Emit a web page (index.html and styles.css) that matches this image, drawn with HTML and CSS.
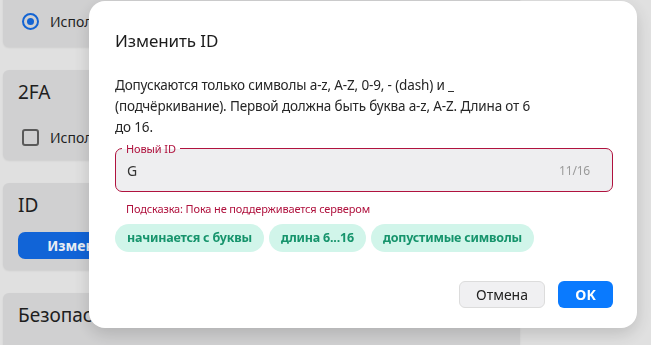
FILE: index.html
```html
<!DOCTYPE html>
<html lang="ru">
  <head>
    <meta charset="UTF-8" />
    <meta name="viewport" content="width=device-width, initial-scale=1.0" />
    <title>Изменить ID</title>
    <link rel="stylesheet" href="styles.css">
  </head>
  <body>
    <div class="page">
      <div class="card card-first">
        <div class="option">
          <span class="radio"></span>
          <span>Использовать пароль</span>
        </div>
      </div>

      <div class="card">
        <div class="card-title">2FA</div>
        <div class="option">
          <span class="checkbox"></span>
          <span>Использовать двухфакторную аутентификацию</span>
        </div>
      </div>

      <div class="card">
        <div class="card-title">ID</div>
        <button class="page-btn">Изменить ID</button>
      </div>

      <div class="card">
        <div class="card-title">Безопасность</div>
      </div>
    </div>

    <div class="overlay">
      <div class="dialog">
        <h2>Изменить ID</h2>
        <p>
          Допускаются только символы a-z, A-Z, 0-9, - (dash) и _
          (подчёркивание). Первой должна быть буква a-z, A-Z. Длина от 6
          до 16.
        </p>

        <div class="field">
          <span class="field-label">Новый ID</span>
          <span class="field-value">G</span>
          <span class="field-count">11/16</span>
        </div>
        <div class="hint">Подсказка: Пока не поддерживается сервером</div>

        <div class="chips">
          <span class="chip">начинается с буквы</span>
          <span class="chip">длина 6...16</span>
          <span class="chip">допустимые символы</span>
        </div>

        <div class="actions">
          <button class="btn btn-cancel">Отмена</button>
          <button class="btn btn-ok">OK</button>
        </div>
      </div>
    </div>
  </body>
</html>
```

FILE: styles.css
```css
body {
  font-family: "Noto Sans", "Open Sans", sans-serif;
  margin: 0;
  padding: 0;
  background-color: #e5e5e5;
  color: #1f1f1f;
  height: 345px;
  overflow: hidden;
}

.page {
  display: flex;
  flex-direction: column;
  gap: 23px;
  width: 517px;
  padding-left: 3px;
}

.card {
  background-color: #d5d5d6;
  border-radius: 6px;
  padding: 10px 15px 13px;
  box-shadow: 0 1px 2px rgba(0, 0, 0, 0.08);
}

.card-first {
  margin-top: -30px;
  padding-top: 41px;
  padding-bottom: 16px;
}

.card-title {
  font-size: 19px;
  line-height: 24px;
  margin-bottom: 15px;
}

.card .card-title + .option {
  padding-top: 8px;
}

.option {
  display: flex;
  align-items: center;
  gap: 11px;
  height: 20px;
  font-size: 14px;
  padding-left: 4px;
}

.radio {
  width: 13px;
  height: 13px;
  border: 2px solid #1466d8;
  border-radius: 50%;
  position: relative;
}

.radio::after {
  content: "";
  position: absolute;
  left: 3px;
  top: 3px;
  width: 7px;
  height: 7px;
  border-radius: 50%;
  background-color: #1466d8;
}

.checkbox {
  width: 13px;
  height: 13px;
  border: 2px solid #5c5c5c;
  border-radius: 3px;
}

.page-btn {
  display: block;
  background-color: #1266dc;
  color: #eef2f8;
  border: none;
  border-radius: 7px;
  font-family: inherit;
  font-size: 14px;
  font-weight: 700;
  width: 150px;
  height: 27px;
  margin-bottom: -2px;
}

.overlay {
  position: fixed;
  inset: 0;
  background-color: rgba(0, 0, 0, 0.02);
  padding: 1px 0 0 89px;
}

.dialog {
  width: 548px;
  height: 327px;
  box-sizing: border-box;
  background-color: white;
  border-radius: 16px;
  box-shadow: 0 6px 18px rgba(0, 0, 0, 0.16);
  padding: 28px 24px 20px 26px;
  display: flex;
  flex-direction: column;
}

h2 {
  margin: 0;
  font-size: 17px;
  font-weight: 400;
  line-height: 24px;
  color: #1c1c1c;
  letter-spacing: -0.1px;
}

p {
  margin: 22px 0 0;
  width: 428px;
  font-size: 13.5px;
  letter-spacing: -0.15px;
  line-height: 21px;
  color: #262626;
}

.field {
  position: relative;
  margin-top: 10px;
  height: 44px;
  box-sizing: border-box;
  border: 1px solid #b0123e;
  border-radius: 7px;
  background-color: #eeeef0;
  display: flex;
  align-items: center;
  justify-content: space-between;
  padding: 0 22px 0 11px;
}

.field-label {
  position: absolute;
  top: -7px;
  left: 6px;
  padding: 0 4px;
  font-size: 11px;
  line-height: 13px;
  letter-spacing: -0.1px;
  color: #b0123e;
  background: linear-gradient(to bottom, white 50%, #eeeef0 50%);
}

.field-value {
  font-size: 14px;
  color: #333;
}

.field-count {
  font-size: 12px;
  letter-spacing: -0.2px;
  color: #9a9a9a;
}

.hint {
  margin: 9px 0 0 11px;
  font-size: 11px;
  line-height: 16px;
  letter-spacing: -0.15px;
  color: #b0123e;
}

.chips {
  display: flex;
  gap: 5px;
  margin-top: 7px;
}

.chip {
  background-color: #d1f5ea;
  color: #16946c;
  font-size: 12.5px;
  letter-spacing: -0.2px;
  font-weight: 700;
  line-height: 28px;
  padding: 0 12px;
  border-radius: 14px;
}

.actions {
  display: flex;
  justify-content: flex-end;
  gap: 13px;
  margin-top: auto;
}

.btn {
  font-family: inherit;
  font-size: 14px;
  height: 27px;
  border-radius: 6px;
  cursor: pointer;
}

.btn-cancel {
  background-color: #f0f0f2;
  border: 1px solid #dcdcdc;
  color: #222;
  width: 86px;
}

.btn-ok {
  background-color: #0a7afe;
  border: none;
  color: white;
  font-weight: 700;
  width: 55px;
}
```
